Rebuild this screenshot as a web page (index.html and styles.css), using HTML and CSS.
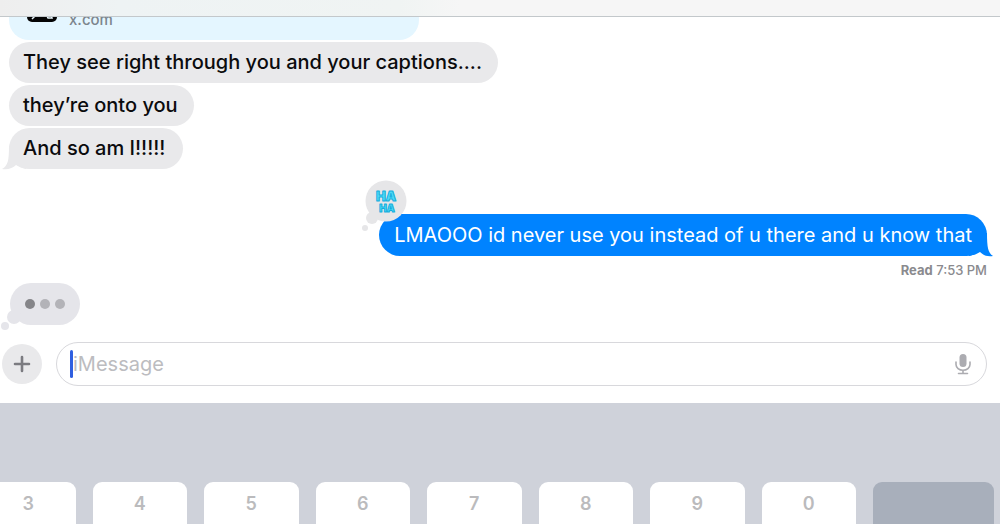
FILE: index.html
```html
<!DOCTYPE html>
<html lang="en">
<head>
<meta charset="utf-8">
<meta name="viewport" content="width=device-width, initial-scale=1">
<title>Messages</title>
<link rel="stylesheet" href="styles.css">
</head>
<body>
<header class="topbar"></header>
<main class="thread">
  <a class="link-card" href="#">
    <svg class="link-logo" width="30" height="30" viewBox="0 0 30 30" aria-hidden="true">
      <rect width="30" height="30" rx="5" fill="#050505"/>
      <path d="M5 27L9 23M19 22l2 4h4l-1-3" fill="none" stroke="#e8f6fc" stroke-width="1.500"/>
    </svg>
    <span class="link-host">x.com</span>
  </a>
  <p class="bubble received">They see right through you and your captions....</p>
  <p class="bubble received">they’re onto you</p>
  <p class="bubble received last">And so am I!!!!!
    <svg class="tail-left" width="24" height="24" viewBox="0 0 24 24" aria-hidden="true"><path d="M7 0C7 14 6 20 0 23C6 24 11 22 14 19C17 21 20 22 24 23V0z" fill="#e9e9eb"/></svg>
  </p>
  <div class="bubble sent">LMAOOO id never use you instead of u there and u know that
    <svg class="tail-right" width="24" height="24" viewBox="0 0 24 24" aria-hidden="true"><path d="M18 0C18 14 19 20 24 23C18 24 14 22 11 19C8 21 5 22 0 23V0z" fill="#0083ff"/></svg>
    <svg class="reaction" width="46" height="54" viewBox="0 0 46 54" role="img" aria-label="Ha ha">
      <g fill="#e6e6e8"><circle cx="25" cy="21" r="20.500"/><circle cx="11" cy="38" r="6"/><circle cx="4" cy="48" r="3"/></g>
      <g class="haha"><text x="25" y="21" font-size="13">HA</text><text x="26" y="32" font-size="10">HA</text></g>
    </svg>
  </div>
  <p class="receipt"><b>Read</b> 7:53 PM</p>
  <div class="typing" aria-label="Typing">
    <i class="dot dark"></i><i class="dot"></i><i class="dot"></i>
    <svg class="typing-tail" width="24" height="24" viewBox="0 0 24 24" aria-hidden="true"><g fill="#e5e5ea"><circle cx="14" cy="11" r="7"/><circle cx="5" cy="20" r="4"/></g></svg>
  </div>
</main>
<form class="composer">
  <button class="add" type="button" aria-label="Add">
    <svg width="18" height="18" viewBox="0 0 18 18" aria-hidden="true"><path d="M9 2v14M2 9h14" stroke="#7b7b80" stroke-width="2.600" stroke-linecap="round"/></svg>
  </button>
  <div class="field">
    <span class="caret"></span>
    <input class="input" type="text" placeholder="iMessage" aria-label="iMessage">
    <button class="mic" type="button" aria-label="Dictate">
      <svg width="16" height="22" viewBox="0 0 16 22" aria-hidden="true"><rect x="4.500" y="1" width="7" height="13" rx="3.500" fill="#acacb1"/><path d="M1 9v2.500a7 5.700 0 0 0 14 0V9M8 17.200v3.300M3.500 20.500h9" fill="none" stroke="#acacb1" stroke-width="1.600" stroke-linecap="round"/></svg>
    </button>
  </div>
</form>
<section class="keyboard" aria-label="Keyboard">
  <button class="key" type="button">3</button>
  <button class="key" type="button">4</button>
  <button class="key" type="button">5</button>
  <button class="key" type="button">6</button>
  <button class="key" type="button">7</button>
  <button class="key" type="button">8</button>
  <button class="key" type="button">9</button>
  <button class="key" type="button">0</button>
  <button class="key delete" type="button" aria-label="Delete"></button>
</section>
</body>
</html>
```
FILE: styles.css
```css
* { box-sizing: border-box; }
body {
  margin: 0;
  height: 100vh;
  display: flex;
  flex-direction: column;
  overflow: hidden;
  background: #fff;
  color: #0b0b0d;
  font-family: Inter, "Liberation Sans", sans-serif;
}
p { margin: 0; }
button { border: 0; padding: 0; font: inherit; }
.topbar {
  flex: none;
  height: 17px;
  border-bottom: 1px solid #c3c8cb;
  background: linear-gradient(90deg, #eeeeee, #eef3f4 12%, #f0f4f3 40%, #f6f6f6 46%);
}
.thread {
  flex: none;
  display: flex;
  flex-direction: column;
  align-items: flex-start;
  gap: 2px;
  padding: 0 13px 17px 9px;
}
.link-card {
  width: 410px;
  max-width: 100%;
  height: 23px;
  display: flex;
  align-items: flex-end;
  gap: 12px;
  padding: 0 18px;
  border-radius: 0 0 20px 20px;
  background: #e4f6ff;
  text-decoration: none;
  overflow: hidden;
}
.link-logo { flex: none; margin-bottom: 18px; }
.link-host { color: #7c858d; font-size: 15px; line-height: 16px; font-weight: 500; margin-bottom: 12px; }
.bubble {
  position: relative;
  padding: 0 16px 0 14px;
  border-radius: 21px;
  font-size: 20px;
  line-height: 41px;
  font-weight: 500;
}
.received { background: #e9e9eb; }
.last { padding-right: 18px; }
.tail-left { position: absolute; left: -7px; bottom: -1px; z-index: -1; }
.sent {
  align-self: flex-end;
  margin-top: 43px;
  padding: 0 15px;
  line-height: 42px;
  background: #0083ff;
  color: #fff;
  font-weight: 400;
}
.tail-right { position: absolute; right: -6px; bottom: -1px; z-index: -1; }
.reaction { position: absolute; left: -18px; top: -34px; }
.haha { fill: #4fdcf8; stroke: #12aede; stroke-width: 1px; stroke-linejoin: round; text-anchor: middle; font-weight: 900; }
.receipt { align-self: flex-end; margin-top: 3px; color: #8a8a8e; font-size: 13px; line-height: 18px; font-weight: 500; }
.typing {
  position: relative;
  display: flex;
  align-items: center;
  gap: 5px;
  height: 42px;
  margin: 2px 0 0 1px;
  padding: 0 15px;
  border-radius: 21px;
  background: #e5e5ea;
}
.typing-tail { position: absolute; left: -10px; bottom: -5px; }
.dot { width: 10px; height: 10px; border-radius: 50%; background: #b3b3b8; }
.dark { background: #858589; }
.composer { flex: none; display: flex; align-items: center; gap: 14px; padding: 0 13px 17px 2px; }
.add { flex: none; display: grid; place-items: center; width: 40px; height: 40px; border-radius: 50%; background: #e9e9eb; }
.field {
  flex: 1;
  display: flex;
  align-items: center;
  height: 44px;
  padding: 0 15px 0 13px;
  border: 1px solid #d8d8dc;
  border-radius: 22px;
}
.caret { width: 3px; height: 28px; border-radius: 2px; background: #2f5fe0; }
.input { flex: 1; min-width: 0; border: 0; padding: 0; outline: 0; background: none; font: 400 20px Inter, "Liberation Sans", sans-serif; }
.input::placeholder { color: #bcbcc0; opacity: 1; }
.mic { display: grid; background: none; }
.keyboard {
  flex: 1;
  display: grid;
  grid-template-columns: repeat(8, 25fr) 32fr;
  gap: 17px;
  margin-left: -19px;
  padding: 79px 6px 0 0;
  min-height: 0;
  overflow: hidden;
  background: #cfd2da;
}
.key {
  height: 88px;
  padding-top: 10px;
  display: flex;
  justify-content: center;
  border-radius: 9px;
  background: #fff;
  color: #bbbbbd;
  font-size: 18px;
  line-height: 24px;
  font-weight: 600;
}
.delete { background: #a8afbb; }
```
